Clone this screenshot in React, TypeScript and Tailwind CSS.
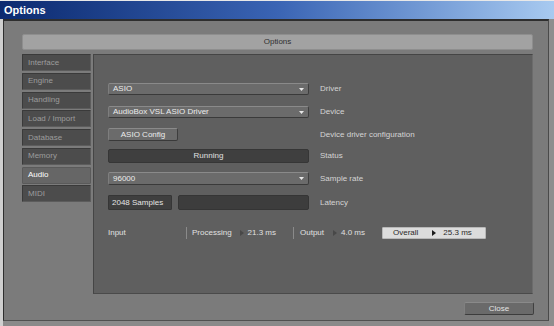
import { ReactNode } from 'react';

const tabs = ['Interface', 'Engine', 'Handling', 'Load / Import', 'Database', 'Memory', 'Audio', 'MIDI'];

function Arrow() {
  return (
    <svg width="5" height="3" viewBox="0 0 5 3" className="shrink-0">
      <path d="M0 0 H5 L2.5 3 Z" fill="#e8e8e8" />
    </svg>
  );
}

function Dropdown({ value }: { value: string }) {
  return (
    <div className="flex items-center w-[201px] h-full rounded-[2px] bg-[#6b6b6b] border border-t-[#8a8a8a] border-l-[#7e7e7e] border-r-[#3e3e3e] border-b-[#3a3a3a] pl-[4px] pr-[4px] text-[#ececec]">
      <span className="flex-1">{value}</span>
      <Arrow />
    </div>
  );
}

function Row({ h, mt, label, children }: { h: number; mt: string; label: string; children: ReactNode }) {
  return (
    <div className={`flex items-center ${mt}`} style={{ height: h }}>
      <div className="w-[201px] h-full flex">{children}</div>
      <span className="ml-[11px] text-[#d4d4d4]">{label}</span>
    </div>
  );
}

function Tri({ color }: { color: string }) {
  return (
    <svg width="4" height="6" viewBox="0 0 4 6" className="shrink-0">
      <path d="M0 0 L4 3 L0 6 Z" fill={color} />
    </svg>
  );
}

export default function App() {
  return (
    <div className="w-[554px] h-[326px] bg-[#8a8a8a] flex flex-col overflow-hidden font-['Liberation_Sans',Arial,sans-serif] text-[8px] leading-none">
      <div className="h-[1px] bg-[#e8e8e8]" />
      <div className="h-[18px] flex items-center pl-[4px] bg-gradient-to-r from-[#0c2a70] via-[#3a64b4] to-[#a8caf0]">
        <span className="text-white font-bold text-[11px]">Options</span>
      </div>
      <div className="flex flex-1">
        <div className="w-[3px] bg-[#cfcfcf]" />
        <div className="w-[546px] h-[302px] bg-[#7b7b7b] border-t-2 border-l border-[#2e2e2e] border-r border-r-[#4a4a4a] border-b border-b-[#505050] flex flex-col pl-[18px] pt-[13px]">
          <div className="w-[511px] h-[16px] bg-[#a2a2a2] rounded-[2px] border border-[#8e8e8e] flex items-center justify-center text-[#303030]">
            Options
          </div>
          <div className="flex mt-[4px] gap-[2px]">
            <div className="w-[69px] flex flex-col gap-[1.75px]">
              {tabs.map((t) => (
                <div
                  key={t}
                  className={
                    t === 'Audio'
                      ? 'h-[17px] flex items-center pl-[5px] bg-[#666666] border border-[#5a5a5a] rounded-[1px] text-white'
                      : 'h-[17px] flex items-center pl-[5px] bg-[#4c4c4c] border border-t-[#3a3a3a] border-l-[#3a3a3a] border-r-[#5c5c5c] border-b-[#5c5c5c] rounded-[1px] text-[#9c9c9c]'
                  }
                >
                  {t}
                </div>
              ))}
            </div>
            <div className="w-[440px] h-[240px] bg-[#5f5f5f] border border-t-[#454545] border-l-[#454545] border-r-[#6c6c6c] border-b-[#4a4a4a] flex flex-col pl-[14px] pt-[28px]">
              <Row h={12} mt="" label="Driver">
                <Dropdown value="ASIO" />
              </Row>
              <Row h={12} mt="mt-[11px]" label="Device">
                <Dropdown value="AudioBox VSL ASIO Driver" />
              </Row>
              <Row h={13} mt="mt-[10px]" label="Device driver configuration">
                <div className="w-[70px] h-full rounded-[2px] bg-[#6b6b6b] border border-t-[#8a8a8a] border-l-[#7e7e7e] border-r-[#3e3e3e] border-b-[#3a3a3a] flex items-center justify-center text-[#ececec]">
                  ASIO Config
                </div>
              </Row>
              <Row h={14} mt="mt-[8px]" label="Status">
                <div className="w-[201px] h-full rounded-[2px] bg-[#3f3f3f] border border-[#363636] flex items-center justify-center text-[#e0e0e0]">
                  Running
                </div>
              </Row>
              <Row h={13} mt="mt-[9px]" label="Sample rate">
                <Dropdown value="96000" />
              </Row>
              <Row h={15} mt="mt-[10px]" label="Latency">
                <div className="w-[64px] h-full rounded-[1px] bg-[#3f3f3f] border border-[#363636] flex items-center pl-[3px] text-[#e4e4e4]">
                  2048 Samples
                </div>
                <div className="ml-[6px] w-[131px] h-full rounded-[2px] bg-[#3d3d3d] border border-[#353535]" />
              </Row>
              <div className="flex items-center h-[12px] mt-[17px] text-[#e0e0e0]">
                <span className="w-[78px]">Input</span>
                <div className="w-px h-[12px] bg-[#8a8a8a]" />
                <div className="w-[106px] flex items-center pl-[5px]">
                  <span>Processing</span>
                  <span className="ml-[8px]"><Tri color="#484848" /></span>
                  <span className="ml-[4px]">21.3 ms</span>
                </div>
                <div className="w-px h-[12px] bg-[#8a8a8a]" />
                <div className="w-[88px] flex items-center pl-[6px]">
                  <span>Output</span>
                  <span className="ml-[9px]"><Tri color="#484848" /></span>
                  <span className="ml-[4px]">4.0 ms</span>
                </div>
                <div className="w-[104px] h-[12px] bg-[#dcdcdc] border border-[#b8b8b8] rounded-[1px] flex items-center pl-[10px] text-[#2a2a2a]">
                  <span>Overall</span>
                  <span className="ml-[14px]"><Tri color="#1a1a1a" /></span>
                  <span className="ml-[7px]">25.3 ms</span>
                </div>
              </div>
            </div>
          </div>
          <div className="flex justify-end w-[512px] mt-[8px]">
            <div className="w-[70px] h-[13px] rounded-[2px] bg-[#6a6a6a] border border-t-[#8a8a8a] border-l-[#808080] border-r-[#404040] border-b-[#3c3c3c] flex items-center justify-center text-[#e4e4e4]">
              Close
            </div>
          </div>
        </div>
        <div className="flex-1 bg-[#8e8e8e]" />
      </div>
    </div>
  );
}
